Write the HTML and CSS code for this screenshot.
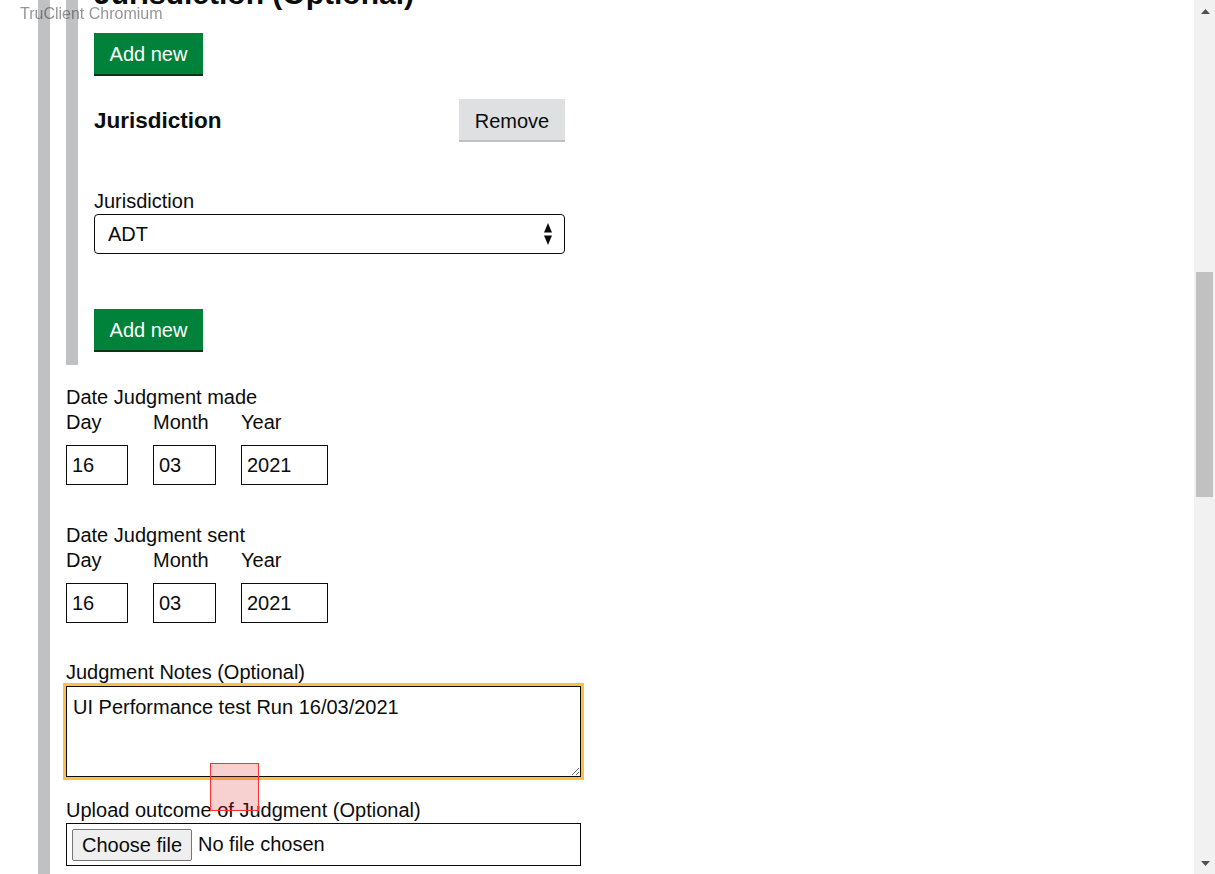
FILE: index.html
```html
<!DOCTYPE html>
<html lang="en">
<head>
<meta charset="utf-8">
<title>Judgment</title>
<link rel="stylesheet" href="styles.css">
</head>
<body>
<div class="screen">
  <main class="page">
    <div class="outer">
      <section class="inner">
        <h2 class="heading-l">Jurisdiction (Optional)</h2>
        <button class="btn btn-green">Add new</button>
        <div class="item-head">
          <h3 class="heading-m">Jurisdiction</h3>
          <button class="btn btn-grey">Remove</button>
        </div>
        <label class="label label-select">Jurisdiction</label>
        <div class="select">
          <span>ADT</span>
          <svg class="select-arrows" width="8" height="22" viewBox="0 0 8 22"><polygon points="0,9.5 4,0 8,9.5" fill="#0b0c0c"/><polygon points="0,12.5 8,12.5 4,22" fill="#0b0c0c"/></svg>
        </div>
        <button class="btn btn-green btn-add2">Add new</button>
      </section>

      <div class="date-group first">
        <div class="label">Date Judgment made</div>
        <div class="date-row">
          <div class="date-item"><label class="label">Day</label><input class="input w-day" value="16"></div>
          <div class="date-item"><label class="label">Month</label><input class="input w-month" value="03"></div>
          <div class="date-item"><label class="label">Year</label><input class="input w-year" value="2021"></div>
        </div>
      </div>

      <div class="date-group">
        <div class="label">Date Judgment sent</div>
        <div class="date-row">
          <div class="date-item"><label class="label">Day</label><input class="input w-day" value="16"></div>
          <div class="date-item"><label class="label">Month</label><input class="input w-month" value="03"></div>
          <div class="date-item"><label class="label">Year</label><input class="input w-year" value="2021"></div>
        </div>
      </div>

      <div class="field notes">
        <label class="label">Judgment Notes (Optional)</label>
        <textarea class="textarea">UI Performance test Run 16/03/2021</textarea>
      </div>

      <div class="field upload">
        <label class="label">Upload outcome of Judgment (Optional)</label>
        <div class="file">
          <button class="file-btn" type="button">Choose file</button>
          <span class="file-name">No file chosen</span>
        </div>
      </div>
    </div>
  </main>
  <div class="scrollbar">
    <div class="sb-arrow"><svg width="9" height="5" viewBox="0 0 9 5"><polygon points="0,5 4.5,0 9,5" fill="#505050"/></svg></div>
    <div class="sb-track"><div class="sb-thumb"></div></div>
    <div class="sb-arrow down"><svg width="9" height="5" viewBox="0 0 9 5"><polygon points="0,0 9,0 4.5,5" fill="#505050"/></svg></div>
  </div>
</div>
<div class="tc-label">TruClient Chromium</div>
<div class="click-marker"></div>
</body>
</html>
```

FILE: styles.css
```css
html, body {
  margin: 0;
  padding: 0;
  background: #ffffff;
}
body {
  font-family: "Liberation Sans", Arial, sans-serif;
  color: #0b0c0c;
  overflow: hidden;
}
.screen {
  display: flex;
  height: 874px;
  overflow: hidden;
}
.page {
  flex: 1;
  padding-left: 38px;
  overflow: hidden;
}
.outer {
  border-left: 12px solid #bfc1c3;
  padding-left: 16px;
  margin-top: -29px;
  min-height: 920px;
}
.inner {
  border-left: 12px solid #bfc1c3;
  padding: 8px 0 15px 16px;
}
.heading-l {
  margin: 0 0 24px;
  font-size: 30px;
  line-height: 30px;
  font-weight: bold;
  white-space: nowrap;
}
.btn {
  display: block;
  box-sizing: border-box;
  border: 0;
  border-radius: 0;
  font-family: "Liberation Sans", Arial, sans-serif;
  font-size: 20px;
  line-height: 25px;
  padding: 9px 0 7px;
  height: 41px;
  white-space: nowrap;
  text-align: center;
  cursor: pointer;
}
.btn-green {
  background: #00823b;
  color: #ffffff;
  box-shadow: 0 2px 0 #003618;
  width: 109px;
}
.btn-grey {
  background: #dee0e2;
  color: #0b0c0c;
  box-shadow: 0 2px 0 #bfc1c3;
  width: 106px;
  padding-top: 10px;
}
.item-head {
  margin-top: 25px;
  width: 471px;
  display: flex;
  justify-content: space-between;
  align-items: center;
}
.heading-m {
  margin: 2px 0 0;
  font-size: 22.5px;
  line-height: 25px;
  font-weight: bold;
}
.label {
  display: block;
  font-size: 20px;
  line-height: 25px;
}
.label-select {
  margin-top: 49px;
}
.select {
  box-sizing: border-box;
  width: 471px;
  height: 40px;
  border: 1px solid #0b0c0c;
  border-radius: 4px;
  display: flex;
  align-items: center;
  justify-content: space-between;
  padding: 0 12px 0 13px;
  font-size: 20px;
}
.select-arrows {
  display: block;
}
.btn-add2 {
  margin-top: 55px;
}
.date-group.first {
  margin-top: 20px;
}
.date-group {
  margin-top: 38px;
}
.date-row {
  display: flex;
  gap: 25px;
}
.date-item {
  display: flex;
  flex-direction: column;
}
.input {
  box-sizing: border-box;
  margin-top: 10px;
  height: 40px;
  border: 1px solid #0b0c0c;
  border-radius: 0;
  padding: 0 5px;
  font-family: "Liberation Sans", Arial, sans-serif;
  font-size: 20px;
  color: #0b0c0c;
}
.w-day { width: 62px; }
.w-month { width: 63px; }
.w-year { width: 87px; }
.field.notes {
  margin-top: 37px;
}
.textarea {
  display: block;
  box-sizing: border-box;
  margin-top: 1px;
  width: 515px;
  height: 91px;
  border: 1px solid #0b0c0c;
  border-radius: 0;
  outline: 3px solid #ffbf47;
  padding: 8px 6px;
  font-family: "Liberation Sans", Arial, sans-serif;
  font-size: 20px;
  line-height: 25px;
  color: #0b0c0c;
  resize: vertical;
}
.field.upload {
  margin-top: 21px;
}
.file {
  box-sizing: border-box;
  width: 515px;
  height: 43px;
  border: 1px solid #0b0c0c;
  padding: 5px;
  display: flex;
  align-items: center;
  font-size: 20px;
}
.file-btn {
  box-sizing: border-box;
  font-family: "Liberation Sans", Arial, sans-serif;
  font-size: 20px;
  line-height: 24px;
  height: 32px;
  width: 120px;
  padding: 3px 0;
  margin: 0 6px 0 0;
  border: 1px solid #767676;
  border-radius: 2px;
  background: #efefef;
  color: #0b0c0c;
  text-align: center;
  align-self: flex-start;
}
.file-name {
  color: #0b0c0c;
  margin-top: -1px;
}
.scrollbar {
  width: 21px;
  background: #f1f1f1;
  display: flex;
  flex-direction: column;
}
.sb-arrow {
  height: 21px;
  display: flex;
  align-items: center;
  justify-content: center;
  padding-left: 1px;
}
.sb-arrow svg { display: block; margin-top: 2px; }
.sb-arrow.down svg { margin-top: -1px; }
.sb-track {
  flex: 1;
}
.sb-thumb {
  margin: 251px 0 0 2px;
  width: 17px;
  height: 225px;
  background: #c1c1c1;
}
.tc-label {
  position: fixed;
  left: 20px;
  top: 5px;
  font-family: "Liberation Sans", Arial, sans-serif;
  font-size: 16px;
  line-height: 18px;
  color: rgba(60, 60, 60, 0.55);
}
.click-marker {
  position: fixed;
  left: 210px;
  top: 763px;
  width: 49px;
  height: 48px;
  box-sizing: border-box;
  border: 1px solid #ff3030;
  background: rgba(220, 40, 40, 0.22);
}
```
